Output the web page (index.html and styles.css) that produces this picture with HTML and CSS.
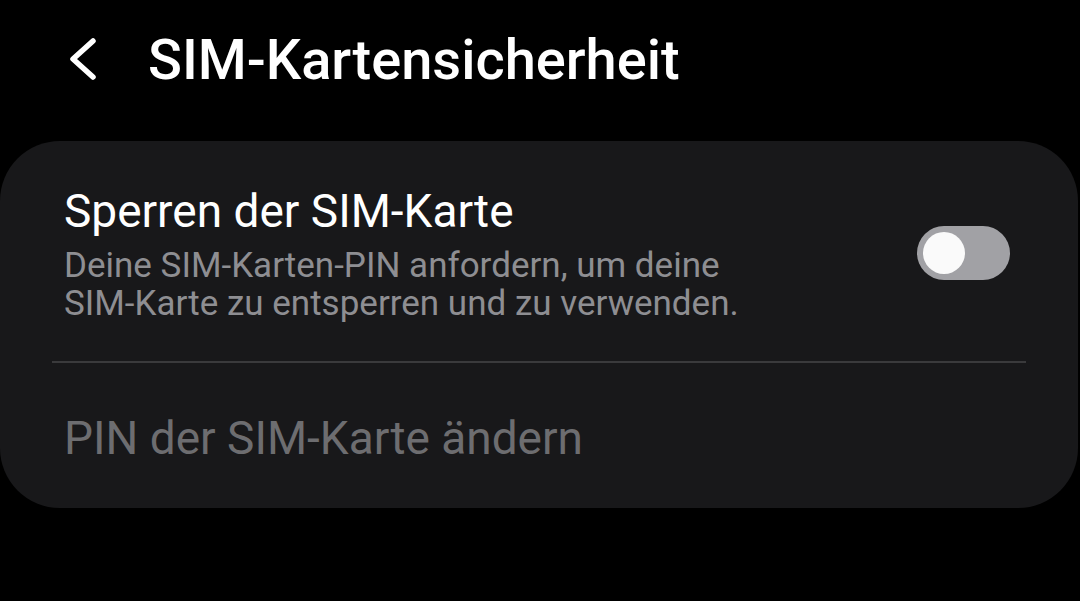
FILE: index.html
```html
<!DOCTYPE html>
<html lang="de">
<head>
  <meta charset="UTF-8">
  <meta name="viewport" content="width=device-width, initial-scale=1.0">
  <title>SIM-Kartensicherheit</title>
  <link rel="stylesheet" href="styles.css">
</head>
<body>
  <div class="header">
    <svg class="back" width="34" height="44" viewBox="0 0 34 44">
      <path d="M29 3 L9 21 L29 39" fill="none" stroke="#fff" stroke-width="5.5" stroke-linecap="round" stroke-linejoin="round"/>
    </svg>
    <h1>SIM-Kartensicherheit</h1>
  </div>

  <div class="card">
    <div class="row">
      <div class="row-text">
        <div class="row-title">Sperren der SIM-Karte</div>
        <div class="row-sub">Deine SIM-Karten-PIN anfordern, um deine<br>SIM-Karte zu entsperren und zu verwenden.</div>
      </div>
      <div class="switch"><div class="knob"></div></div>
    </div>
    <div class="divider"></div>
    <div class="row-disabled">PIN der SIM-Karte ändern</div>
  </div>
</body>
</html>
```

FILE: styles.css
```css
* {
  margin: 0;
  padding: 0;
  box-sizing: border-box;
}

body {
  font-family: Roboto, "Liberation Sans", sans-serif;
  background: #000;
  color: #fff;
  width: 1080px;
  height: 601px;
  overflow: hidden;
}

.header {
  display: flex;
  align-items: center;
  height: 120px;
  padding-left: 64px;
}

.back {
  margin-right: 50px;
}

h1 {
  font-size: 56px;
  font-weight: 500;
}

.card {
  background: #18181a;
  margin: 21px 2px 0 0;
  border-radius: 60px;
  padding: 0 52px;
  height: 367px;
}

.row {
  display: flex;
  align-items: center;
  justify-content: space-between;
  padding: 42px 12px 38px;
}

.row-title {
  font-size: 46px;
  line-height: 56px;
}

.row-sub {
  margin-top: 8px;
  font-size: 35px;
  line-height: 38px;
  color: #8e8e92;
}

.switch {
  width: 93px;
  height: 54px;
  border-radius: 27px;
  background: #a1a1a5;
  padding: 6px;
  margin-right: 4px;
}

.knob {
  width: 42px;
  height: 42px;
  border-radius: 50%;
  background: #fafafa;
}

.divider {
  height: 2px;
  background: #3a3a3c;
}

.row-disabled {
  font-size: 46px;
  line-height: 56px;
  color: #6d6d70;
  padding: 47px 12px 41px;
}
```
